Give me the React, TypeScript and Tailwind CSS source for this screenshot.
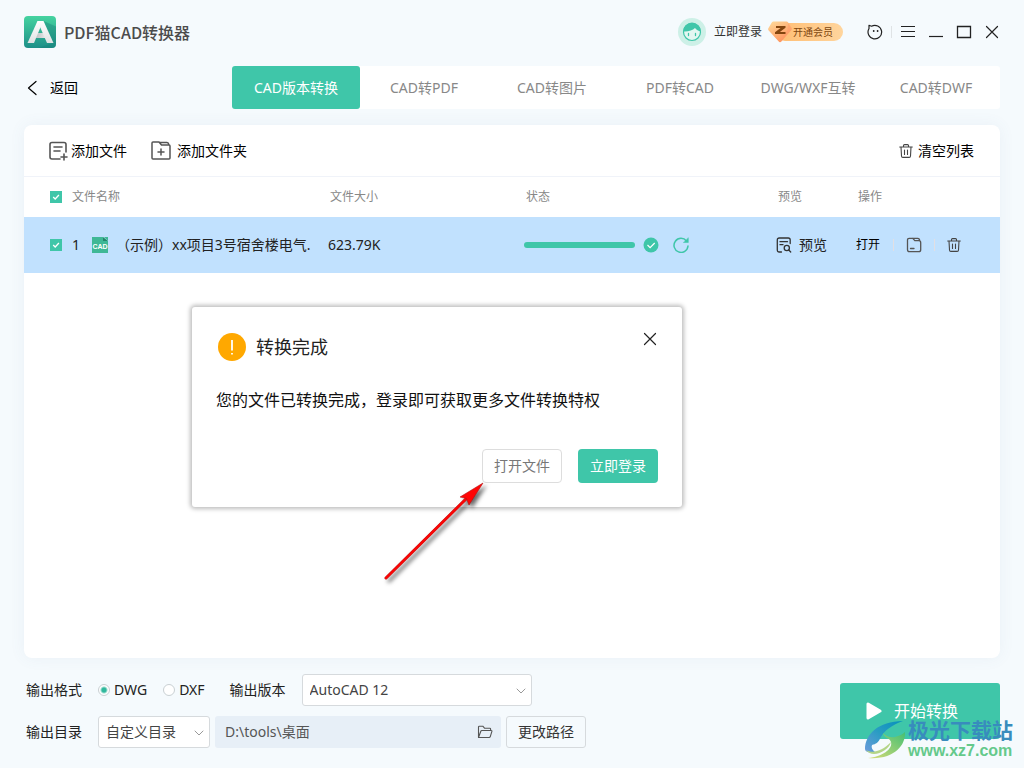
import { useState, type ReactNode, type SVGProps } from "react";

function Icon({ children, ...props }: SVGProps<SVGSVGElement> & { children: ReactNode }) {
  return (
    <svg fill="none" stroke="currentColor" strokeWidth="1.3" strokeLinecap="round" strokeLinejoin="round" aria-hidden="true" {...props}>
      {children}
    </svg>
  );
}

function Logo() {
  return (
    <svg viewBox="0 0 32 32" className="size-8" aria-hidden="true">
      <defs>
        <linearGradient id="logoBg" x1="0" y1="0" x2="0" y2="1">
          <stop offset="0" stopColor="#45d3a0" />
          <stop offset="1" stopColor="#1d8f88" />
        </linearGradient>
        <linearGradient id="logoStroke" x1="0" y1="0" x2="0" y2="1">
          <stop offset="0" stopColor="#ffffff" />
          <stop offset="1" stopColor="#dfe2e3" />
        </linearGradient>
        <linearGradient id="logoBar" x1="0" y1="0" x2="1" y2="0">
          <stop offset="0" stopColor="#b4b9bb" />
          <stop offset="1" stopColor="#eceeee" />
        </linearGradient>
      </defs>
      <rect width="32" height="32" rx="4" fill="url(#logoBg)" />
      <path d="M19.500 5 32 10.500V28a4 4 0 0 1-4 4H14l15-5Z" fill="#178079" opacity=".4" />
      <path d="M11 17h12v5H10Z" fill="url(#logoBar)" />
      <path d="M13.500 5H19L10 27H3.500Z" fill="url(#logoStroke)" />
      <path d="M13.500 5h6L29.500 27H23Z" fill="url(#logoStroke)" />
    </svg>
  );
}

function Avatar() {
  return (
    <svg viewBox="0 0 28 28" className="size-7" aria-hidden="true">
      <circle cx="14" cy="14" r="14" fill="#cdf0e7" />
      <circle cx="14" cy="14" r="8.500" fill="#e3f7f1" stroke="#3fc6a9" strokeWidth="1.200" />
      <path d="M5 13.500a9 9 0 0 1 18 0c-2.700-.4-4.600-1.500-6-3.500C14.500 12.500 10 14 5 13.500Z" fill="#3fc6a9" />
      <path d="M10.500 15.500v2M17.500 15.500v2" stroke="#3fc6a9" strokeWidth="1.300" strokeLinecap="round" fill="none" />
    </svg>
  );
}

function Gem() {
  return (
    <svg viewBox="0 0 24 22" className="absolute top-0 left-0 h-[22px] w-6" aria-hidden="true">
      <defs>
        <linearGradient id="gem" x1="0" y1="0" x2=".6" y2="1">
          <stop offset="0" stopColor="#ffdc9c" />
          <stop offset="1" stopColor="#ff945d" />
        </linearGradient>
      </defs>
      <path d="M5.500 .5h13q1 0 1.700 .9l3.300 5.200q.7 1.200-.2 2.200L13.500 20.300q-1.500 1.700-3 0L.7 9.500q-1-1.200-.2-2.400L3.800 1.500q.6-1 1.700-1Z" fill="url(#gem)" />
      <path d="m20 2 3.500 5.500q.6.900-.2 1.800L13.500 20.300q-.7.800-1.500.8L19.500 9Z" fill="#ff9a68" opacity=".45" />
      <path d="M8 5h9.500v1.800l-5.600 4.200h5.600v2H7v-1.800L12.600 7H8Z" fill="#84450f" />
    </svg>
  );
}

function TrashIcon() {
  return (
    <Icon viewBox="0 0 14 14" className="h-[14px] w-[14px] text-[#444]" strokeWidth="1.100">
      <path d="M.7 3h12.600M4.500 3V1.600q0-1 1-1h3q1 0 1 1V3M2 3l.5 9q.1 1.400 1.300 1.400h6.400q1.200 0 1.300-1.400L12 3M5.500 6v4.500M8.500 6v4.500" />
    </Icon>
  );
}

function RowCheckbox({ label }: { label: string }) {
  return (
    <span className="relative flex size-3 shrink-0">
      <input type="checkbox" defaultChecked aria-label={label} className="peer size-3 appearance-none border border-[#3fc6a9] bg-white checked:bg-[#3fc6a9]" />
      <svg viewBox="0 0 12 12" fill="none" stroke="#fff" strokeWidth="1.300" className="pointer-events-none absolute inset-0 hidden size-3 peer-checked:block" aria-hidden="true">
        <path d="m3.200 6 2 2 3.700-4" />
      </svg>
    </span>
  );
}

function SelectBox({ id, className, children }: { id: string; className: string; children: ReactNode }) {
  return (
    <div className={`relative ${className}`}>
      <select id={id} className="h-8 w-full appearance-none rounded-[3px] border border-[#d6dadd] bg-white pr-6 pl-[7px] text-[#444]">
        {children}
      </select>
      <Icon viewBox="0 0 10 6" className="pointer-events-none absolute top-[14px] right-[6px] h-[6px] w-[10px] text-[#999]" strokeWidth="1">
        <path d="m1 1 4 4 4-4" />
      </Icon>
    </div>
  );
}

const tabs = ["CAD版本转换", "CAD转PDF", "CAD转图片", "PDF转CAD", "DWG/WXF互转", "CAD转DWF"];

function Header() {
  return (
    <header className="flex h-8 items-center justify-between">
      <div className="flex items-center gap-2">
        <Logo />
        <h1 className="font-['Noto_Sans_CJK_SC',sans-serif] text-base font-medium text-[#4c4c4c]">PDF猫CAD转换器</h1>
      </div>
      <div className="flex items-center text-[#222]">
        <Avatar />
        <a href="#login" className="ml-2 text-xs text-[#333]">立即登录</a>
        <a href="#vip" className="relative ml-[6px] flex h-[22px] w-[75px] items-center">
          <span className="ml-2 flex h-[18px] w-full items-center rounded-full bg-linear-to-r from-[#ffbd72] to-[#ffd59d] pl-[17px] text-[10px] text-[#80460f]">开通会员</span>
          <Gem />
        </a>
        <div className="ml-6 flex items-center">
          <button aria-label="客服">
            <Icon viewBox="0 0 16 16" className="size-4" strokeWidth="1.200">
              <path d="M2 1.300v3.500M4.500 2.200a6.800 6.800 0 1 1-2.600 2.600M2 1.300l2.500.9" />
              <path d="M6.700 7h.01M10.600 7h.01" strokeWidth="1.800" />
            </Icon>
          </button>
          <span className="ml-2 h-3 w-px bg-[#dfe3e5]" />
          <button aria-label="菜单" className="ml-2">
            <Icon viewBox="0 0 16 16" className="size-4" strokeWidth="1" strokeLinecap="butt"><path d="M1 2.500h14M1 7.500h14M1 12.500h14" /></Icon>
          </button>
          <button aria-label="最小化" className="ml-3">
            <Icon viewBox="0 0 16 16" className="size-4" strokeWidth="1.200" strokeLinecap="butt"><path d="M1 12.500h14" /></Icon>
          </button>
          <button aria-label="最大化" className="ml-3">
            <Icon viewBox="0 0 16 16" className="size-4" strokeWidth="1.300" strokeLinejoin="miter"><path d="M1.500 2.500h13v11h-13Z" /></Icon>
          </button>
          <button aria-label="关闭" className="ml-3">
            <Icon viewBox="0 0 16 16" className="size-4" strokeWidth="1.200"><path d="m2.500 2.500 11 11M13.500 2.500l-11 11" /></Icon>
          </button>
        </div>
      </div>
    </header>
  );
}

function FileTable() {
  return (
    <table className="w-full table-fixed text-left">
      <colgroup>
        <col />
        <col className="w-[196px]" />
        <col className="w-[252px]" />
        <col className="w-[80px]" />
        <col className="w-[144px]" />
      </colgroup>
      <thead>
        <tr className="h-10 text-xs text-[#888]">
          <th className="pl-[26px] font-normal">
            <div className="flex items-center gap-[10px]"><RowCheckbox label="全选" />文件名称</div>
          </th>
          <th className="pl-[2px] font-normal">文件大小</th>
          <th className="pl-[2px] font-normal">状态</th>
          <th className="pl-[2px] font-normal">预览</th>
          <th className="pl-[2px] font-normal">操作</th>
        </tr>
      </thead>
      <tbody>
        <tr className="h-14 bg-[#c1e1fe] text-[#222]">
          <td className="pl-[26px]">
            <div className="flex items-center">
              <RowCheckbox label="选择文件 1" />
              <span className="ml-[10px] w-5 shrink-0">1</span>
              <svg viewBox="0 0 16 16" className="size-4 shrink-0" role="img" aria-label="CAD">
                <path d="M0 0h11v4h5v12H0Z" fill="#3fb896" />
                <path d="m11 0 5 4h-5Z" fill="#23866b" />
                <path d="M12 0h4v4Z" fill="#3fb896" />
                <text x="8" y="12" textAnchor="middle" fontSize="7" fontWeight="700" fill="#fff" fontFamily="Liberation Sans, sans-serif">CAD</text>
              </svg>
              <span className="ml-2 whitespace-nowrap">（示例）xx项目3号宿舍楼电气.</span>
            </div>
          </td>
          <td>623.79K</td>
          <td>
            <div className="flex items-center">
              <div role="progressbar" aria-label="转换进度" aria-valuenow={100} className="h-[6px] w-[111px] rounded-full bg-[#3fc6a9]" />
              <svg viewBox="0 0 16 16" className="ml-2 size-4" aria-hidden="true">
                <circle cx="8" cy="8" r="7.500" fill="#3fc6a9" />
                <path d="m4.500 8 2.600 2.600L11.700 6" fill="none" stroke="#fff" strokeWidth="1.200" />
              </svg>
              <button aria-label="重新转换" className="ml-[14px] text-[#3fc6a9]">
                <Icon viewBox="0 0 16 16" className="size-4" strokeWidth="1.500">
                  <path d="M13.500 4A7 7 0 1 0 15 9" />
                  <path d="M15.300 1v4.500h-4.600Z" fill="currentColor" strokeWidth=".5" />
                </Icon>
              </button>
            </div>
          </td>
          <td>
            <button className="flex items-center gap-[7px]">
              <Icon viewBox="0 0 16 16" className="size-4 text-[#333]">
                <path d="M5.500 15H3.300Q1.300 15 1.300 13V3q0-2 2-2h8.900q2 0 2 2v3.500M4 4.700h7.500M4 7.700h3" />
                <circle cx="10.800" cy="11" r="2.600" />
                <path d="m12.700 13 2 2" />
              </Icon>
              预览
            </button>
          </td>
          <td>
            <div className="flex items-center">
              <button className="text-xs text-black">打开</button>
              <span className="ml-[13px] h-3 w-px bg-[#e2dfe3]" />
              <button aria-label="打开文件夹" className="ml-3">
                <Icon viewBox="0 0 16 16" className="size-4 text-[#555]">
                  <path d="M1.500 3q0-1.700 1.700-1.700h3.600l2 2.400h4q1.900 0 1.900 2v7q0 2-2 2H3.500q-2 0-2-2ZM7 1.300h4.700q1.900 0 2 2.400M4.500 11.500h3.500" />
                </Icon>
              </button>
              <span className="ml-3 h-3 w-px bg-[#e2dfe3]" />
              <button aria-label="删除文件" className="ml-3"><TrashIcon /></button>
            </div>
          </td>
        </tr>
      </tbody>
    </table>
  );
}

function CompletionDialog({ onClose }: { onClose: () => void }) {
  return (
    <section role="dialog" aria-labelledby="dialogTitle" className="absolute top-[182px] left-[168px] flex w-[490px] flex-col rounded-[3px] bg-white px-6 pt-[22px] pb-6 text-[#222] shadow-[0_0_4px_2px_rgba(0,0,0,0.26)]">
      <div className="flex h-9 items-center">
        <svg viewBox="0 0 28 28" className="ml-[2px] size-7" aria-hidden="true">
          <circle cx="14" cy="14" r="14" fill="#ffa800" />
          <path d="M14 7v10.500M14 20v1.600" stroke="#fff" strokeWidth="1.800" />
        </svg>
        <h2 id="dialogTitle" className="ml-[10px] text-lg">转换完成</h2>
        <button aria-label="关闭提示" onClick={onClose} className="mr-px mb-4 ml-auto">
          <Icon viewBox="0 0 14 14" className="size-[14px]" strokeWidth="1.200"><path d="m1.500 1.500 11 11M12.500 1.500l-11 11" /></Icon>
        </button>
      </div>
      <p className="mt-[23px] text-base leading-6 text-[#111]">您的文件已转换完成，登录即可获取更多文件转换特权</p>
      <div className="mt-[37px] flex justify-end gap-4">
        <button className="h-[34px] w-20 rounded-[4px] border border-[#ddd] text-[#777]">打开文件</button>
        <button className="h-[34px] w-20 rounded-[4px] bg-[#3fc6a9] text-white">立即登录</button>
      </div>
    </section>
  );
}

function PointerArrow() {
  return (
    <svg viewBox="0 0 120 120" className="pointer-events-none absolute top-[350px] left-[354px] size-[120px]" aria-hidden="true">
      <g style={{ filter: "drop-shadow(3px 3px 2px rgba(0,0,0,.6))" }}>
        <path d="M8 103 91 21" stroke="#c02020" strokeWidth="3" strokeLinecap="round" />
        <path d="M8 103 91 21" stroke="#f90505" strokeWidth="2.400" strokeLinecap="round" />
        <path d="M105 8 91 30l-2.500-6.500L82 22Z" fill="#ff0505" stroke="#b01313" strokeWidth=".6" />
      </g>
    </svg>
  );
}

function Watermark() {
  return (
    <div className="pointer-events-none absolute right-[11px] bottom-[7px] flex items-end">
      <svg viewBox="0 0 44 42" className="h-[42px] w-[44px]" aria-hidden="true">
        <defs>
          <linearGradient id="swoosh" x1="0" y1="1" x2="1" y2="0">
            <stop offset="0" stopColor="#6c9bdc" />
            <stop offset=".5" stopColor="#299cc3" />
            <stop offset="1" stopColor="#0690bb" />
          </linearGradient>
          <linearGradient id="leaf" x1="0" y1="1" x2="1" y2="0">
            <stop offset="0" stopColor="#d8dc78" />
            <stop offset="1" stopColor="#44bf72" />
          </linearGradient>
        </defs>
        <path d="M1 30C1 16 14 2 39 2 28 6 20 12 17 18c-3 6-5 7-9 8-1 2 0 5 3 7C5 34 1 33 1 30Z" fill="url(#swoosh)" />
        <path d="M19 14c4 4 8 5 12 4 4-1 8-3 10-5 1 14-12 28-37 26 14-1 25-9 23-16-1-4-7-4-8-9Z" fill="url(#leaf)" />
        <path d="M2 31c7 4 16 1 25-8-2 9-19 17-25 8Z" fill="#b4d587" />
      </svg>
      <div className="flex flex-col">
        <span className="font-['Noto_Sans_CJK_SC',sans-serif] text-[21px] leading-6 font-bold text-[#388cbd]">极光下载站</span>
        <span className="font-['Liberation_Sans',sans-serif] text-base leading-5 font-bold text-[#64c98b]">www.xz7.com</span>
      </div>
    </div>
  );
}

function Footer() {
  return (
    <footer className="flex items-center justify-between pt-4 pb-5 pl-[2px]">
      <div className="flex flex-col gap-[10px]">
        <div className="flex h-8 items-center">
          <fieldset className="flex items-center">
            <legend className="float-left w-[72px]">输出格式</legend>
            <label className="flex items-center gap-1">
              <input type="radio" name="format" defaultChecked className="size-3 appearance-none rounded-full border border-[#c9d0d3] bg-white checked:bg-[radial-gradient(circle,#31b89d_0_2px,#fff_4px)]" />DWG
            </label>
            <label className="ml-4 flex items-center gap-1">
              <input type="radio" name="format" className="size-3 appearance-none rounded-full border border-[#c9d0d3] bg-white checked:bg-[radial-gradient(circle,#31b89d_0_2px,#fff_4px)]" />DXF
            </label>
          </fieldset>
          <label htmlFor="version" className="ml-[25px]">输出版本</label>
          <SelectBox id="version" className="ml-4 w-[230px]">
            <option>AutoCAD 12</option>
          </SelectBox>
        </div>
        <div className="flex h-8 items-center">
          <label htmlFor="directory" className="w-[72px]">输出目录</label>
          <SelectBox id="directory" className="w-28">
            <option>自定义目录</option>
          </SelectBox>
          <div className="ml-[5px] flex h-8 w-[286px] items-center rounded-[3px] bg-[#e7eff7] pr-2 pl-[10px] text-[#555]">
            <input aria-label="输出路径" defaultValue={"D:\\tools\\桌面"} className="min-w-0 flex-1 bg-transparent" />
            <button aria-label="浏览">
              <Icon viewBox="0 0 16 14" className="h-[14px] w-4" strokeWidth="1.100">
                <path d="M1.500 12.500V2q0-.8.800-.8h3.500l1.700 2h5.300q.8 0 .8.800v1.500M1.500 12.500l2.300-6.300q.3-.7 1-.7h9.400q1 0 .7.900l-1.700 5.400q-.3.700-1 .7Z" />
              </Icon>
            </button>
          </div>
          <button className="ml-[5px] h-8 w-20 rounded-[3px] border border-[#d6dadd] text-[#333]">更改路径</button>
        </div>
      </div>
      <button className="flex h-14 w-40 items-center justify-center gap-3 rounded-[3px] bg-[#3fc6a9] pr-4 text-base text-white">
        <svg viewBox="0 0 16 18" className="h-[18px] w-4" aria-hidden="true">
          <path d="M2 2v14l12-7Z" fill="#fff" stroke="#fff" strokeWidth="3" strokeLinejoin="round" />
        </svg>
        开始转换
      </button>
    </footer>
  );
}

export default function App() {
  const [activeTab, setActiveTab] = useState(0);
  const [dialogOpen, setDialogOpen] = useState(true);
  return (
    <div className="relative flex min-h-screen flex-col bg-[#f5fafd] px-6 pt-4 font-['Noto_Sans','Noto_Sans_CJK_SC',sans-serif] text-sm text-[#222]">
      <Header />
      <div className="mt-[18px] flex h-[43px] items-center">
        <button className="flex w-[208px] items-center gap-[10px] text-black">
          <Icon viewBox="0 0 16 16" className="size-4" strokeWidth="1.200"><path d="M12 1.500 4.500 8l7.500 6.500" /></Icon>
          返回
        </button>
        <nav className="grid h-full flex-1 grid-cols-6 rounded-[3px] bg-white">
          {tabs.map((tab, index) => (
            <button
              key={tab}
              onClick={() => setActiveTab(index)}
              className={index === activeTab ? "rounded-[3px] bg-[#3fc6a9] text-white" : "text-[#888]"}
            >
              {tab}
            </button>
          ))}
        </nav>
      </div>
      <main className="relative mt-4 flex-1 rounded-lg bg-white shadow-[0_0_16px_rgba(90,120,150,0.07)]">
        <div className="flex h-[52px] items-center border-b border-[#f0f3f9] pr-[26px] pl-6 text-black">
          <button className="flex items-center gap-[3px]">
            <Icon viewBox="0 0 20 20" className="size-5 text-[#555]" strokeWidth="1.600">
              <path d="M12 18H4q-2 0-2-2V3.500q0-2 2-2h12q2 0 2 2V11M6 6h8M6 10h6M16 13v6M13 16h6" />
            </Icon>
            添加文件
          </button>
          <button className="ml-6 flex items-center gap-[6px]">
            <Icon viewBox="0 0 20 20" className="size-5 text-[#555]" strokeWidth="1.500">
              <path d="M1 2q0-1 1-1h6l2.500 3H18q1 0 1 1v12q0 1-1 1H2q-1 0-1-1ZM9 1.500h7q1.500 0 2 2.300M10 8v6M7 11h6" />
            </Icon>
            添加文件夹
          </button>
          <button className="ml-auto flex items-center gap-[5px]"><TrashIcon />清空列表</button>
        </div>
        <FileTable />
        {dialogOpen && <CompletionDialog onClose={() => setDialogOpen(false)} />}
        <PointerArrow />
      </main>
      <Footer />
      <Watermark />
    </div>
  );
}
